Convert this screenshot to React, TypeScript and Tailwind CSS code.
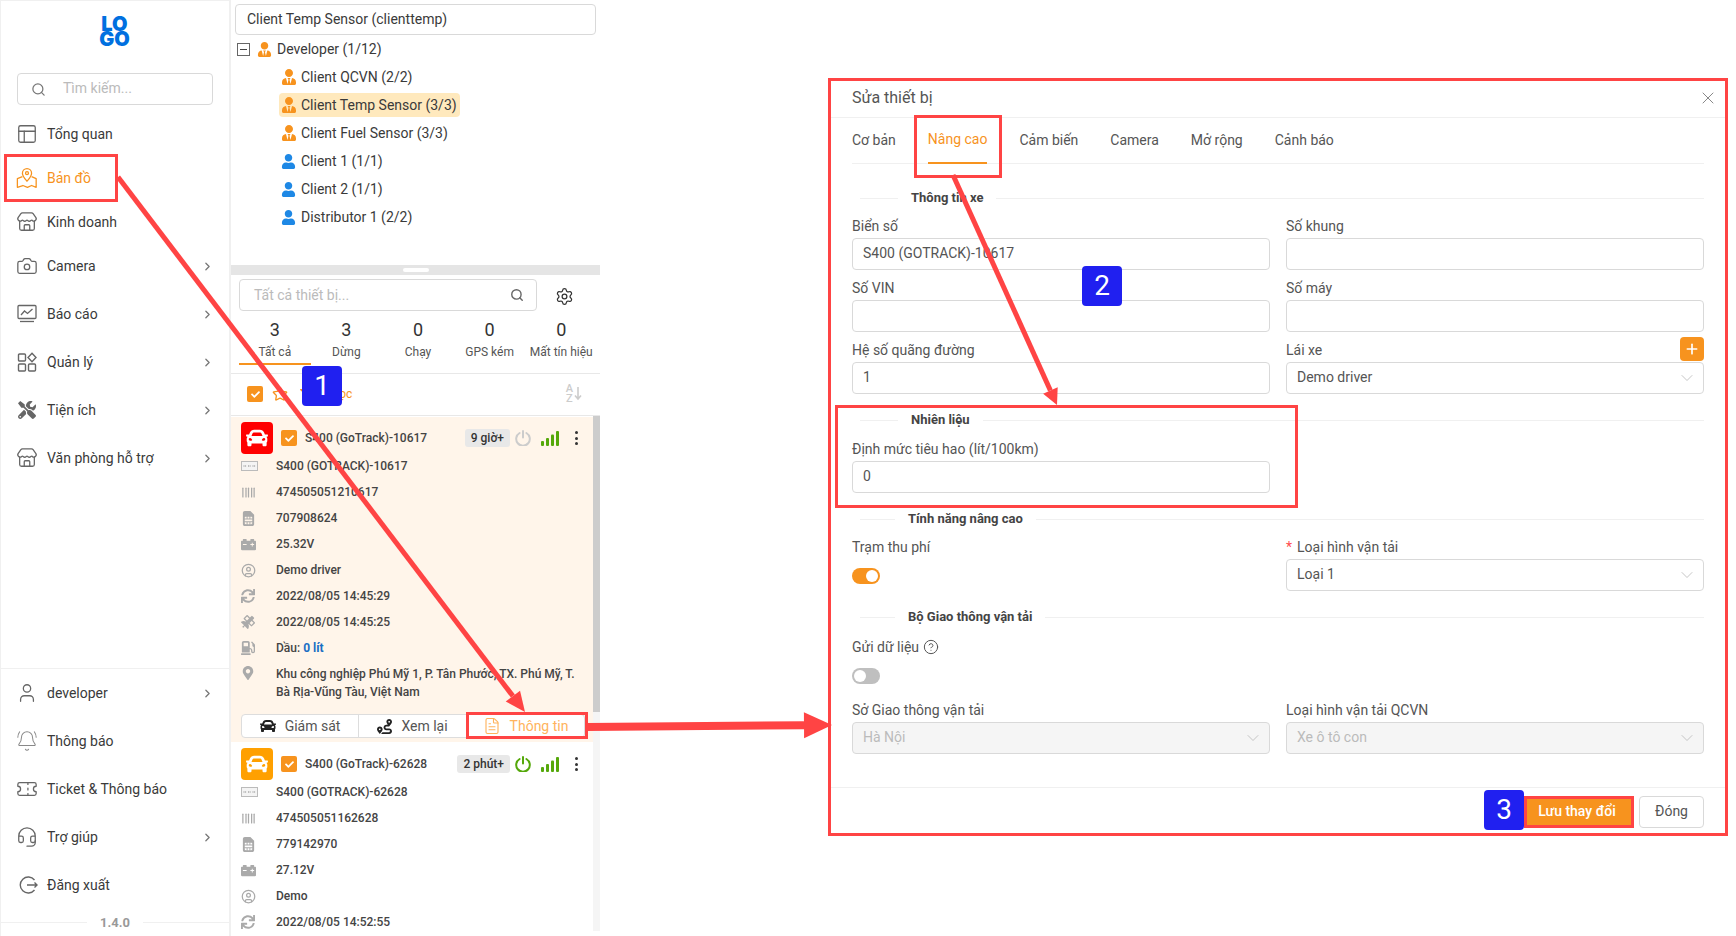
import type { ReactNode } from 'react';
import { Barcode, BellRing, Camera, ChevronDown, ChevronRight, CircleHelp, CircleUser, FileText, Headset, Layout, Plus, Search, Settings, Star, Store, Ticket, User, X } from 'lucide-react';
import { FaCar, FaCarBattery, FaFilter, FaGasPump, FaMapMarkerAlt, FaRoute, FaSatellite, FaSimCard, FaSync, FaTools, FaUser, FaUserTie, FaCheck } from 'react-icons/fa';

const ORANGE = '#f7931e';

function MapIcon() {
  return (
    <svg width="22" height="22" viewBox="0 0 24 24" fill="none" stroke={ORANGE} strokeWidth="1.4" strokeLinejoin="round">
      <path d="M12 15.5c-2.5-3-5-5.6-5-8.8a5 5 0 0 1 10 0c0 3.2-2.5 5.8-5 8.8z" />
      <circle cx="12" cy="6.7" r="1.6" />
      <path d="M7 10.5l-5.5 2.2v9.5l6-2 5 2 4.5-2 5 2v-9.5L17 10.5" />
    </svg>
  );
}

function ReportIcon() {
  return (
    <svg className="ml-[1px]" width="20" height="20" viewBox="0 0 20 20" fill="none" stroke="#666" strokeWidth="1.3">
      <rect x="1" y="1.5" width="18" height="13" rx="1" />
      <path d="M4 11l3.5-4 3 2.5L15.5 5" />
      <path d="M3 17.5h14" />
    </svg>
  );
}

function ManageIcon() {
  return (
    <svg className="ml-[1px]" width="20" height="20" viewBox="0 0 20 20" fill="none" stroke="#666" strokeWidth="1.4">
      <rect x="1.5" y="2" width="7" height="7" rx="1" />
      <rect x="1.5" y="12" width="7" height="7" rx="1" />
      <rect x="11.5" y="12" width="7" height="7" rx="1" />
      <path d="M15 1.2l4 4.3-4 4.3-4-4.3z" />
    </svg>
  );
}

function LogoutIcon() {
  return (
    <svg className="ml-[2px]" width="20" height="20" viewBox="0 0 20 20" fill="none" stroke="#666" strokeWidth="1.4">
      <path d="M16.5 5a8 8 0 1 0 0 10" />
      <path d="M9 10h10M16.5 7.5L19 10l-2.5 2.5" />
    </svg>
  );
}

function PlateIcon() {
  return (
    <svg width="17" height="10" viewBox="0 0 17 10" fill="none">
      <rect x="0.5" y="0.5" width="16" height="9" fill="#f4f4f4" stroke="#bbb" />
      <path d="M2.5 5h3M7 5h3M11.5 5h3" stroke="#aaa" strokeWidth="1.6" strokeDasharray="1 0.6" />
    </svg>
  );
}

function SignalBars() {
  return (
    <svg width="18" height="15" viewBox="0 0 18 15" fill="#55a80a">
      <rect x="0" y="10" width="3" height="5" rx="1" />
      <rect x="5" y="7" width="3" height="8" rx="1" />
      <rect x="10" y="3.5" width="3" height="11.5" rx="1" />
      <rect x="15" y="0" width="3" height="15" rx="1" />
    </svg>
  );
}

function PowerIcon({ color }: { color: string }) {
  return (
    <svg width="16" height="16" viewBox="0 0 16 16" fill="none" stroke={color} strokeWidth="2" strokeLinecap="round">
      <path d="M4.6 3a6.8 6.8 0 1 0 6.8 0" />
      <path d="M8 1v6.5" />
    </svg>
  );
}

function Kebab() {
  return (
    <span className="flex h-[14px] w-[3px] flex-col justify-between">
      <span className="h-[3px] w-[3px] rounded-full bg-[#333]" />
      <span className="h-[3px] w-[3px] rounded-full bg-[#333]" />
      <span className="h-[3px] w-[3px] rounded-full bg-[#333]" />
    </span>
  );
}

function NavRow({ icon, label, arrow, tall, active }: { icon: ReactNode; label: string; arrow?: boolean; tall?: boolean; active?: boolean }) {
  return (
    <div className={`flex items-center pl-[15px] pr-[15px] text-sm ${tall ? 'h-[48px]' : 'h-[44px]'} ${active ? 'text-[#f7931e]' : 'text-[#3a3a3a]'}`}>
      <span className="flex w-[31px] shrink-0 items-center">{icon}</span>
      <span className="flex-1">{label}</span>
      {arrow && <ChevronRight size={13} strokeWidth={2.4} color="#777" />}
    </div>
  );
}

function Sidebar() {
  const gray = { size: 22, color: '#666', strokeWidth: 1.4 };
  return (
    <aside className="flex h-[936px] w-[231px] shrink-0 flex-col border-r-2 border-l border-t border-[#f0f0f0]">
      <div className="flex h-[72px] justify-center pt-[16px]">
        <div className="ml-[-1px] text-center text-[20px] font-black leading-[15px] tracking-[0px] text-[#0070e0] [font-family:Inter,sans-serif]">
          <div>LO</div>
          <div>GO</div>
        </div>
      </div>
      <div className="mx-[16px] flex h-[32px] items-center rounded-sm border border-[#d9d9d9] pb-[2px] pl-[13px] text-sm text-[#bbb]">
        <Search size={15} color="#777" className="mt-[2px]" />
        <span className="ml-[17px]">Tìm kiếm...</span>
      </div>
      <div className="mt-[7px]">
        <NavRow icon={<Layout {...gray} />} label="Tổng quan" />
        <NavRow icon={<MapIcon />} label="Bản đồ" active />
        <NavRow icon={<Store {...gray} />} label="Kinh doanh" />
        <div className="mt-[-2px]">
          <NavRow icon={<Camera {...gray} />} label="Camera" arrow tall />
          <NavRow icon={<ReportIcon />} label="Báo cáo" arrow tall />
          <NavRow icon={<ManageIcon />} label="Quản lý" arrow tall />
          <NavRow icon={<FaTools className="ml-[2px]" size={18} color="#666" />} label="Tiện ích" arrow tall />
          <NavRow icon={<Store {...gray} />} label="Văn phòng hỗ trợ" arrow tall />
        </div>
      </div>
      <div className="mt-auto border-t border-[#f0f0f0]">
        <NavRow icon={<User {...gray} />} label="developer" arrow tall />
        <NavRow icon={<BellRing size={22} color="#888" strokeWidth={1.1} />} label="Thông báo" tall />
        <NavRow icon={<Ticket {...gray} />} label="Ticket & Thông báo" tall />
        <NavRow icon={<Headset {...gray} />} label="Trợ giúp" arrow tall />
        <NavRow icon={<LogoutIcon />} label="Đăng xuất" tall />
        <div className="flex h-[27px] items-center">
          <span className="h-px w-[86px] bg-[#f0f0f0]" />
          <span className="w-[56px] text-center text-[13px] font-bold text-[#999]">1.4.0</span>
          <span className="h-px flex-1 bg-[#f0f0f0]" />
        </div>
      </div>
    </aside>
  );
}

const clients = [
  { name: 'Client QCVN (2/2)', tie: true },
  { name: 'Client Temp Sensor (3/3)', tie: true, active: true },
  { name: 'Client Fuel Sensor (3/3)', tie: true },
  { name: 'Client 1 (1/1)' },
  { name: 'Client 2 (1/1)' },
  { name: 'Distributor 1 (2/2)' },
];

function Tree() {
  return (
    <div className="h-[265px] pt-[4px]">
      <div className="mx-[4px] flex h-[31px] items-center rounded-sm border border-[#d9d9d9] pb-[2px] pl-[11px] text-sm text-[#3a3a3a]">Client Temp Sensor (clienttemp)</div>
      <div className="flex h-[28px] items-center pl-[6px] text-sm text-[#3a3a3a]">
        <span className="flex h-[13px] w-[13px] items-center justify-center border border-[#666]">
          <span className="h-px w-[7px] bg-[#444]" />
        </span>
        <FaUserTie size={15} color={ORANGE} className="ml-[7px]" />
        <span className="ml-[5px]">Developer (1/12)</span>
      </div>
      {clients.map((c) => (
        <div key={c.name} className="flex h-[28px] items-center pl-[48px] text-sm text-[#3a3a3a]">
          <span className={`flex h-[24px] items-center rounded-sm pl-[2px] pr-[3px] ${c.active ? 'bg-[#ffe9bd]' : ''}`}>
            {c.tie ? <FaUserTie size={16} color={ORANGE} /> : <FaUser size={15} color="#1e88e5" />}
            <span className={c.tie ? 'ml-[4px]' : 'ml-[5px]'}>{c.name}</span>
          </span>
        </div>
      ))}
    </div>
  );
}

const stats = [
  { n: 3, label: 'Tất cả' },
  { n: 3, label: 'Dừng' },
  { n: 0, label: 'Chạy' },
  { n: 0, label: 'GPS kém' },
  { n: 0, label: 'Mất tín hiệu' },
];

function InfoRow({ icon, children, tall }: { icon: ReactNode; children: ReactNode; tall?: boolean }) {
  return (
    <div className={`flex pl-[10px] pr-[8px] text-xs font-medium text-[#444] ${tall ? 'h-[41px] pt-[4px] leading-[18px]' : 'h-[26px] items-center'}`}>
      <span className={`flex w-[35px] shrink-0 ${tall ? 'pt-[1px]' : 'items-center'}`}>{icon}</span>
      <span>{children}</span>
    </div>
  );
}

type Device = {
  title: string;
  plate: string;
  imei: string;
  sim: string;
  volt: string;
  driver: string;
  sync: string;
  gps?: string;
  age: string;
  live: boolean;
  color: string;
};

const devices: Device[] = [
  { title: 'S400 (GoTrack)-10617', plate: 'S400 (GOTRACK)-10617', imei: '474505051210617', sim: '707908624', volt: '25.32V', driver: 'Demo driver', sync: '2022/08/05 14:45:29', gps: '2022/08/05 14:45:25', age: '9 giờ+', live: false, color: 'bg-[#ff0000]' },
  { title: 'S400 (GoTrack)-62628', plate: 'S400 (GOTRACK)-62628', imei: '474505051162628', sim: '779142970', volt: '27.12V', driver: 'Demo', sync: '2022/08/05 14:52:55', age: '2 phút+', live: true, color: 'bg-[#ffa000]' },
];

function DeviceCard({ d, expanded }: { d: Device; expanded?: boolean }) {
  const ic = '#aaa';
  return (
    <div className={expanded ? 'h-[325px] bg-[#fff5ea] pt-[5px]' : 'pt-[6px]'}>
      <div className="mb-[-1px] flex h-[32px] items-center pl-[10px] pr-[15px]">
        <span className={`flex h-[32px] w-[32px] items-center justify-center rounded-[4px] ${d.color}`}>
          <FaCar size={22} color="#fff" />
        </span>
        <span className="ml-[8px] flex h-[16px] w-[16px] items-center justify-center rounded-[2px] bg-[#f7931e]">
          <FaCheck size={9} color="#fff" />
        </span>
        <span className="ml-[8px] flex-1 text-xs font-medium text-[#444]">{d.title}</span>
        <span className="flex h-[18px] items-center rounded-[3px] bg-[#e8e8e8] px-[6px] text-xs font-medium text-[#333]">{d.age}</span>
        <span className="ml-[5px]">
          <PowerIcon color={d.live ? '#55a80a' : '#ccc'} />
        </span>
        <span className="ml-[10px]">
          <SignalBars />
        </span>
        <span className="ml-[16px]">
          <Kebab />
        </span>
      </div>
      <InfoRow icon={<PlateIcon />}>{d.plate}</InfoRow>
      <InfoRow icon={<Barcode size={15} color={ic} />}>{d.imei}</InfoRow>
      <InfoRow icon={<FaSimCard size={15} color={ic} />}>{d.sim}</InfoRow>
      <InfoRow icon={<FaCarBattery size={15} color={ic} />}>{d.volt}</InfoRow>
      <InfoRow icon={<CircleUser size={15} color={ic} />}>{d.driver}</InfoRow>
      <InfoRow icon={<FaSync size={14} color={ic} />}>{d.sync}</InfoRow>
      {d.gps && <InfoRow icon={<FaSatellite size={14} color={ic} />}>{d.gps}</InfoRow>}
      {expanded && (
        <>
          <InfoRow icon={<FaGasPump size={14} color={ic} />}>
            Dầu: <span className="font-bold text-[#1a6fc4]">0 lít</span>
          </InfoRow>
          <InfoRow tall icon={<FaMapMarkerAlt size={14} color={ic} />}>
            Khu công nghiệp Phú Mỹ 1, P. Tân Phước, TX. Phú Mỹ, T. Bà Rịa-Vũng Tàu, Việt Nam
          </InfoRow>
          <div className="ml-[10px] mr-[8px] mt-[12px] flex h-[24px] rounded-sm border border-[#ddd] bg-white text-sm text-[#555]">
            <span className="flex w-[117px] items-center justify-center gap-[9px] border-r border-[#ddd]">
              <FaCar size={16} color="#222" /> Giám sát
            </span>
            <span className="flex w-[108px] items-center justify-center gap-[9px] border-r border-[#ddd]">
              <FaRoute size={15} color="#222" /> Xem lại
            </span>
            <span className="flex flex-1 items-center justify-center gap-[9px] text-[#ffb35c]">
              <FileText size={18} color="#ffb35c" strokeWidth={1.5} /> Thông tin
            </span>
          </div>
        </>
      )}
    </div>
  );
}

function DeviceColumn() {
  return (
    <section className="h-[936px] w-[369px] shrink-0">
      <Tree />
      <div className="flex h-[10px] items-center justify-center bg-[#e5e5e5]">
        <span className="h-[4px] w-[26px] rounded-full bg-white" />
      </div>
      <div className="flex h-[36px] items-end pl-[8px]">
        <div className="flex h-[32px] w-[298px] items-center justify-between rounded-sm border border-[#d9d9d9] pl-[14px] pr-[12px] text-sm text-[#bbb]">
          <span>Tất cả thiết bị...</span>
          <Search size={14} color="#666" strokeWidth={2.4} />
        </div>
        <span className="mb-[5px] ml-[18px]">
          <Settings size={19} color="#333" strokeWidth={1.6} />
        </span>
      </div>
      <div className="ml-[8px] mt-[6px] grid h-[48px] w-[358px] grid-cols-5 text-center">
        {stats.map((s, i) => (
          <div key={s.label} className={i === 0 ? 'border-b-2 border-[#f7931e]' : ''}>
            <div className="text-lg leading-[26px] text-[#333]">{s.n}</div>
            <div className="text-xs leading-[18px] text-[#555]">{s.label}</div>
          </div>
        ))}
      </div>
      <div className="mt-[8px] flex h-[43px] items-center border-y border-[#e8e8e8] pb-[1px] pl-[16px] pr-[18px] text-xs text-[#f7931e]">
        <span className="flex h-[16px] w-[16px] items-center justify-center rounded-[2px] bg-[#f7931e]">
          <FaCheck size={9} color="#fff" />
        </span>
        <Star size={16} color={ORANGE} className="ml-[9px]" />
        <FaFilter size={11} color={ORANGE} className="ml-[12px]" />
        <span className="ml-[8px] flex-1">Bộ lọc</span>
        <span className="flex items-center text-[#ccc]">
          <span className="text-center text-[11px] font-medium leading-[10px]">
            <div>A</div>
            <div>Z</div>
          </span>
          <svg className="ml-[1px]" width="8" height="14" viewBox="0 0 8 14" fill="none" stroke="#ccc" strokeWidth="1.6">
            <path d="M4 0v12M1 8.5L4 12l3-3.5" />
          </svg>
        </span>
      </div>
      <div className="flex h-[515px] overflow-hidden">
        <div className="w-[362px] pt-[1px]">
          <DeviceCard d={devices[0]} expanded />
          <DeviceCard d={devices[1]} />
        </div>
        <div className="w-[7px]">
          <div className="h-[296px] bg-[#ccc]" />
          <div className="h-[219px] bg-[#f5f5f5]" />
        </div>
      </div>
    </section>
  );
}

function Divider({ title, short }: { title: string; short?: boolean }) {
  return (
    <div className="flex h-[20px] items-center gap-[13px] pl-[8px] text-[13px] font-bold text-[#444]">
      <span className={`h-px bg-[#f0f0f0] ${short ? 'w-[35px]' : 'w-[38px]'}`} />
      <span>{title}</span>
      <span className="h-px flex-1 bg-[#f0f0f0]" />
    </div>
  );
}

function Label({ children }: { children: ReactNode }) {
  return <div className="h-[20px] text-sm leading-[20px] text-[#555]">{children}</div>;
}

function Box({ value, select, disabled }: { value?: string; select?: boolean; disabled?: boolean }) {
  return (
    <div className={`mt-[2px] flex h-[32px] items-center justify-between rounded-sm border border-[#d9d9d9] pb-[2px] pl-[10px] pr-[6px] text-sm ${disabled ? 'bg-[#f5f5f5] text-[#bbb]' : 'bg-white text-[#555]'}`}>
      <span>{value}</span>
      {select && <ChevronDown size={20} color="#bbb" strokeWidth={1} className="mt-[2px]" />}
    </div>
  );
}

function Toggle({ on }: { on?: boolean }) {
  return (
    <span className={`flex h-[16px] w-[28px] items-center rounded-full px-[2px] ${on ? 'justify-end bg-[#f7931e]' : 'justify-start bg-[#bfbfbf]'}`}>
      <span className="h-[12px] w-[12px] rounded-full bg-white" />
    </span>
  );
}

const tabs = ['Cơ bản', 'Nâng cao', 'Cảm biến', 'Camera', 'Mở rộng', 'Cảnh báo'];

function Modal() {
  return (
    <section className="ml-[228px] mt-[78px] flex h-[758px] w-[900px] shrink-0 flex-col border-[3px] border-[#ff4444]">
      <header className="flex h-[37px] shrink-0 items-center justify-between border-b border-[#f0f0f0] pb-[2px] pl-[21px] pr-[7px] text-base text-[#555]">
        <span>Sửa thiết bị</span>
        <X size={20} color="#888" strokeWidth={1.2} />
      </header>
      <div className="flex-1 px-[21px]">
        <div className="flex h-[46px] gap-[32px] border-b border-[#f0f0f0] text-sm text-[#555]">
          {tabs.map((t) => (
            <span key={t} className={`flex items-center pb-[2px] ${t === 'Nâng cao' ? 'mb-[-1px] border-b-2 border-[#f7931e] text-[#f7931e]' : ''}`}>
              {t}
            </span>
          ))}
        </div>
        <div className="mt-[24px]">
          <Divider title="Thông tin xe" />
        </div>
        <div className="mt-[8px] grid grid-cols-2 gap-x-[16px] gap-y-[8px]">
          <div>
            <Label>Biển số</Label>
            <Box value="S400 (GOTRACK)-10617" />
          </div>
          <div>
            <Label>Số khung</Label>
            <Box />
          </div>
          <div>
            <Label>Số VIN</Label>
            <Box />
          </div>
          <div>
            <Label>Số máy</Label>
            <Box />
          </div>
          <div>
            <Label>Hệ số quãng đường</Label>
            <Box value="1" />
          </div>
          <div className="relative">
            <Label>Lái xe</Label>
            <span className="absolute right-0 top-[-3px] flex h-[24px] w-[24px] items-center justify-center rounded-sm bg-[#f7931e]">
              <Plus size={16} color="#fff" strokeWidth={2.5} />
            </span>
            <Box value="Demo driver" select />
          </div>
        </div>
        <div className="mt-[16px]">
          <Divider title="Nhiên liệu" />
        </div>
        <div className="mt-[9px] grid grid-cols-2 gap-x-[16px]">
          <div>
            <Label>Định mức tiêu hao (lít/100km)</Label>
            <Box value="0" />
          </div>
        </div>
        <div className="mt-[16px]">
          <Divider short title="Tính năng nâng cao" />
        </div>
        <div className="mt-[8px] grid grid-cols-2 gap-x-[16px]">
          <div>
            <Label>Trạm thu phí</Label>
            <div className="mt-[11px]">
              <Toggle on />
            </div>
          </div>
          <div>
            <Label>
              <span className="mr-[5px] text-[#ff4d4f]">*</span>Loại hình vận tải
            </Label>
            <Box value="Loại 1" select />
          </div>
        </div>
        <div className="mt-[16px]">
          <Divider short title="Bộ Giao thông vận tải" />
        </div>
        <div className="mt-[10px]">
          <Label>
            <span className="flex items-center gap-[4px]">
              Gửi dữ liệu <CircleHelp size={16} color="#555" strokeWidth={1.5} />
            </span>
          </Label>
          <div className="mt-[11px]">
            <Toggle />
          </div>
        </div>
        <div className="mt-[16px] grid grid-cols-2 gap-x-[16px]">
          <div>
            <Label>Sở Giao thông vận tải</Label>
            <Box value="Hà Nội" select disabled />
          </div>
          <div>
            <Label>Loại hình vận tải QCVN</Label>
            <Box value="Xe ô tô con" select disabled />
          </div>
        </div>
      </div>
      <footer className="flex h-[46px] shrink-0 items-start justify-end gap-[5px] border-t border-[#f0f0f0] pr-[21px] pt-[8px] text-sm">
        <span className="flex h-[32px] w-[110px] items-center justify-center bg-[#f7931e] pb-[2px] pr-[4px] font-medium text-white">Lưu thay đổi</span>
        <span className="flex h-[32px] w-[65px] items-center justify-center rounded-sm border border-[#d9d9d9] pb-[2px] text-[#555]">Đóng</span>
      </footer>
    </section>
  );
}

function Arrow({ x1, y1, x2, y2, width, head, spread }: { x1: number; y1: number; x2: number; y2: number; width: number; head: number; spread: number }) {
  const len = Math.hypot(x2 - x1, y2 - y1);
  const ux = (x2 - x1) / len;
  const uy = (y2 - y1) / len;
  const bx = x2 - ux * head;
  const by = y2 - uy * head;
  const pts = `${x2},${y2} ${bx - uy * spread},${by + ux * spread} ${bx + uy * spread},${by - ux * spread}`;
  return (
    <>
      <line x1={x1} y1={y1} x2={bx} y2={by} stroke="#ff4444" strokeWidth={width} />
      <polygon points={pts} fill="#ff4444" />
    </>
  );
}

const marks = [
  { id: 'nav', cls: 'left-[4px] top-[154px] h-[48px] w-[114px]' },
  { id: 'tab', cls: 'left-[914px] top-[115px] h-[63px] w-[88px]' },
  { id: 'fuel', cls: 'left-[835px] top-[405px] h-[103px] w-[463px]' },
  { id: 'info', cls: 'left-[466px] top-[712px] h-[27px] w-[122px]' },
  { id: 'save', cls: 'left-[1524px] top-[796px] h-[32px] w-[110px]' },
];

const badges = [
  { n: 1, cls: 'left-[302px] top-[366px]' },
  { n: 2, cls: 'left-[1082px] top-[266px]' },
  { n: 3, cls: 'left-[1484px] top-[790px]' },
];

export default function App() {
  return (
    <div className="relative flex h-[936px] w-full overflow-hidden bg-white [font-family:Roboto,sans-serif]">
      <Sidebar />
      <DeviceColumn />
      <Modal />

      {marks.map((m) => (
        <div key={m.id} className={`pointer-events-none absolute border-[3px] border-[#ff4444] ${m.cls}`} />
      ))}
      <svg className="pointer-events-none absolute left-0 top-0 h-[936px] w-[1736px]" viewBox="0 0 1736 936">
        <Arrow x1={118} y1={177} x2={525} y2={712} width={5} head={20} spread={9} />
        <Arrow x1={953} y1={175} x2={1057} y2={405} width={5} head={16} spread={8} />
        <Arrow x1={587} y1={727} x2={832} y2={725} width={8} head={28} spread={13} />
      </svg>
      {badges.map((b) => (
        <div key={b.n} className={`absolute flex h-[40px] w-[40px] items-center justify-center rounded-sm bg-[#2020f0] text-[28px] text-white ${b.cls}`}>
          {b.n}
        </div>
      ))}
    </div>
  );
}
